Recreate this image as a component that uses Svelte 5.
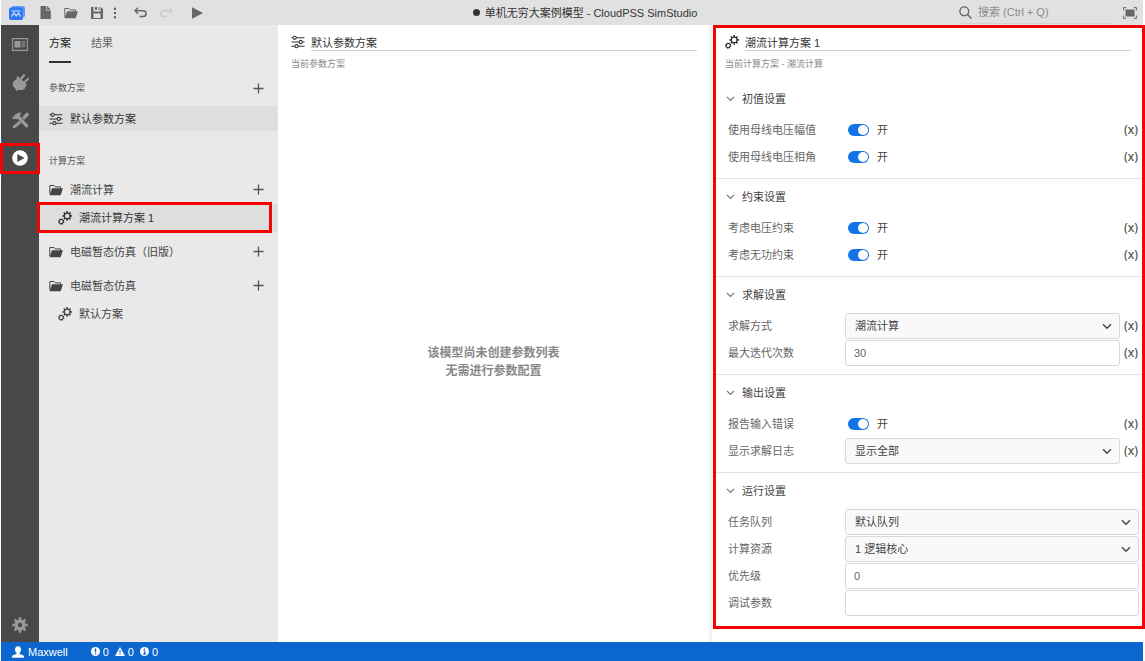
<script lang="ts">
  type Field = {
    id: string;
    label: string;
    kind: 'switch' | 'select' | 'text';
    value?: string;
    expr?: boolean;
  };

  const groups = [
    { name: '潮流计算', plans: ['潮流计算方案 1'] },
    { name: '电磁暂态仿真（旧版）', plans: [] },
    { name: '电磁暂态仿真', plans: ['默认方案'] },
  ];

  const sections: { title: string; fields: Field[] }[] = [
    {
      title: '初值设置',
      fields: [
        { id: 'voltage', label: '使用母线电压幅值', kind: 'switch', expr: true },
        { id: 'angle', label: '使用母线电压相角', kind: 'switch', expr: true },
      ],
    },
    {
      title: '约束设置',
      fields: [
        { id: 'limit-v', label: '考虑电压约束', kind: 'switch', expr: true },
        { id: 'limit-q', label: '考虑无功约束', kind: 'switch', expr: true },
      ],
    },
    {
      title: '求解设置',
      fields: [
        { id: 'method', label: '求解方式', kind: 'select', value: '潮流计算', expr: true },
        { id: 'iterations', label: '最大迭代次数', kind: 'text', value: '30', expr: true },
      ],
    },
    {
      title: '输出设置',
      fields: [
        { id: 'report', label: '报告输入错误', kind: 'switch', expr: true },
        { id: 'log', label: '显示求解日志', kind: 'select', value: '显示全部', expr: true },
      ],
    },
    {
      title: '运行设置',
      fields: [
        { id: 'queue', label: '任务队列', kind: 'select', value: '默认队列' },
        { id: 'resource', label: '计算资源', kind: 'select', value: '1 逻辑核心' },
        { id: 'priority', label: '优先级', kind: 'text', value: '0' },
        { id: 'debug', label: '调试参数', kind: 'text', value: '' },
      ],
    },
  ];

  let selected = $state('潮流计算方案 1');
  let tab = $state('方案');

  // toothed ring with a round hole, filled with evenodd
  function gear(cx: number, cy: number, outer: number, inner: number, hole: number, teeth = 8, turn = 0): string {
    const step = (Math.PI * 2) / teeth;
    const pts: string[] = [];
    for (let i = 0; i < teeth; i++) {
      const a = i * step + turn;
      for (const [r, o] of [[inner, -0.3], [outer, -0.2], [outer, 0.2], [inner, 0.3]]) {
        pts.push(`${(cx + r * Math.cos(a + o * step)).toFixed(2)} ${(cy + r * Math.sin(a + o * step)).toFixed(2)}`);
      }
    }
    return `M${pts.join('L')}ZM${cx - hole} ${cy}a${hole} ${hole} 0 1 0 ${hole * 2} 0a${hole} ${hole} 0 1 0 ${-hole * 2} 0Z`;
  }
</script>

{#snippet gears()}
  <svg width="14" height="14" viewBox="0 0 14 14" fill="currentColor" fill-rule="evenodd" aria-hidden="true">
    <path d={gear(9.2, 4.9, 4.9, 3.5, 2.2)} />
    <path d={gear(3.2, 10.6, 3.2, 2.6, 1.5, 8, 0.3)} />
  </svg>
{/snippet}

{#snippet sliders()}
  <svg width="14" height="14" viewBox="0 0 14 14" fill="none" stroke="currentColor" stroke-width="1.1" aria-hidden="true">
    <path d="M.5 2.8H2M5.4 2.8h8M.5 7H8M11.4 7h2.1M.5 11.2h3.3M7.2 11.2h6.3" />
    <circle cx="3.7" cy="2.8" r="1.6" />
    <circle cx="9.7" cy="7" r="1.6" />
    <circle cx="5.5" cy="11.2" r="1.6" />
  </svg>
{/snippet}

{#snippet folder()}
  <svg width="14" height="12" viewBox="0 0 14 12" aria-hidden="true">
    <path d="M.8 10V1.500h4.200l1.200 1.400h5.300V5" fill="none" stroke="currentColor" stroke-width="1" />
    <path d="M3 4.200h10.900l-2.200 7H.6z" fill="currentColor" />
  </svg>
{/snippet}

{#snippet chevron(size: number)}
  <svg class="chevron" width={size} height={size} viewBox="0 0 10 10" fill="none" stroke="currentColor" stroke-width="1.4" aria-hidden="true">
    <path d="M1 3.2 5 7.2 9 3.2" />
  </svg>
{/snippet}

{#snippet add(name: string)}
  <button class="add" aria-label="新建{name}">
    <svg width="11" height="11" viewBox="0 0 11 11" stroke="currentColor" stroke-width="1.3"><path d="M5.5 .5v10M.5 5.5h10" /></svg>
  </button>
{/snippet}

<div class="app">
  <header class="topbar">
    <div class="tools">
      <svg class="logo" width="16" height="14" viewBox="0 0 16 14" aria-hidden="true">
        <rect x="2.5" width="13.5" height="11.5" rx="2" fill="#5b9bff" />
        <rect y="1.5" width="14" height="12.5" rx="2" fill="#2f78f3" />
        <path d="M2.5 10.500 5 7l2.200 3 2.300-3 2 3.500M2.500 5h9" fill="none" stroke="#dceaff" stroke-width="1.1" />
      </svg>
      <button aria-label="新建">
        <svg width="11" height="13" viewBox="0 0 11 13" fill="currentColor"><path d="M.5 0H6.300v4.500h4.500V13H.5zM7 0l3.8 3.8H7z" /></svg>
      </button>
      <button aria-label="打开">{@render folder()}</button>
      <button aria-label="保存">
        <svg width="12" height="12" viewBox="0 0 12 12" fill="currentColor" fill-rule="evenodd"><path d="M0 0h2.5v4.5h7V0L12 2v10H0zM4 0h2v3H4zM7.5 0h1v3h-1zM2.5 6.5V11h7V6.5z" /></svg>
      </button>
      <button class="more" aria-label="更多">
        <svg width="4" height="12" viewBox="0 0 4 12" fill="currentColor"><circle cx="2" cy="1.7" r="1.2" /><circle cx="2" cy="6" r="1.2" /><circle cx="2" cy="10.3" r="1.2" /></svg>
      </button>
      <button aria-label="撤销">
        <svg width="13" height="11" viewBox="0 0 13 11" fill="none" stroke="currentColor" stroke-width="1.5"><path d="M4 .7 1 3.7l3 3M1 3.7h8.2a2.9 2.9 0 0 1 0 5.8H5.5" /></svg>
      </button>
      <button class="redo" aria-label="重做" disabled>
        <svg width="13" height="11" viewBox="0 0 13 11" fill="none" stroke="currentColor" stroke-width="1.2"><path d="M9 .7l3 3-3 3M12 3.7H3.8a2.9 2.9 0 0 0 0 5.8h3.7" /></svg>
      </button>
      <button class="run" aria-label="运行">
        <svg width="11" height="12" viewBox="0 0 11 12" fill="currentColor"><path d="M0 .3 11 6 0 11.7z" /></svg>
      </button>
    </div>
    <h1><span class="dot"></span>单机无穷大案例模型 - CloudPSS SimStudio</h1>
    <div class="topbar-end">
      <label class="search">
        <svg width="13" height="13" viewBox="0 0 13 13" fill="none" stroke="currentColor" stroke-width="1.4" aria-hidden="true"><circle cx="5.3" cy="5.3" r="4.4" /><path d="m8.5 8.5 4 4" /></svg>
        <input type="search" placeholder="搜索 (Ctrl + Q)" aria-label="搜索" />
      </label>
      <button class="full" aria-label="全屏">
        <svg width="14" height="12" viewBox="0 0 14 12"><path d="M.6 3.5V.6h2.6M10.8.6h2.6v2.9M13.4 8.5v2.9h-2.6M3.2 11.4H.6V8.5" fill="none" stroke="currentColor" /><path d="M2.5 2.5h9v7h-9z" fill="currentColor" /></svg>
      </button>
    </div>
  </header>

  <div class="body">
    <nav class="rail">
      <button aria-label="总览">
        <svg width="16" height="13" viewBox="0 0 16 13"><path d="M.6.6h14.8v11.8H.6z" fill="none" stroke="currentColor" stroke-width="1.1" /><path d="M2.5 3h6v6.5h-6z" fill="currentColor" /><path d="M9.5 3h4v6.5h-4z" fill="currentColor" opacity=".5" /></svg>
      </button>
      <button aria-label="接口">
        <svg width="17" height="17" viewBox="0 0 17 17" fill="currentColor"><path d="M4.500 3.300 5.800 2 15 10.700l-1.300 1.500c0 2.700-3.500 4.600-7.300 3.500L4.200 17l-1-2.600C-.8 12 .3 6.500 4.900 5z" /><path d="m9 5 3-3.800M12.300 8.300l3.700-3.300" stroke="currentColor" stroke-width="2.200" stroke-linecap="round" /></svg>
      </button>
      <button aria-label="实现">
        <svg width="17" height="17" viewBox="0 0 17 17" fill="currentColor"><path d="M3 2.800 6.200.8h3.600L7.900 2.900l.4 1.700 8.400 9.200-2.200 2.200-8.800-9.200-1.600.8L2.800 6.400 1.600 7.600.1 5.900z" /><path d="m14.400.6-4.300 5 2 2.100 4.700-4.300-.3-2.200zM7.200 8.700 1 14l-.3 2 2 .2 6.700-5.200z" /></svg>
      </button>
      <button class="active marked" aria-label="运行" aria-current="page">
        <svg width="16" height="16" viewBox="0 0 16 16" fill="currentColor" fill-rule="evenodd"><path d="M8 .2a7.8 7.8 0 1 0 0 15.6A7.8 7.8 0 1 0 8 .2zM5.300 3.900 12.500 8l-7.200 4.100z" /></svg>
      </button>
      <button class="settings" aria-label="设置">
        <svg width="16" height="16" viewBox="0 0 16 16" fill="currentColor" fill-rule="evenodd"><path d={gear(8, 8, 7.8, 5.6, 2.2)} /></svg>
      </button>
    </nav>

    <aside class="sidebar">
      <div class="tabs" role="tablist">
        {#each ['方案', '结果'] as name}
          <button role="tab" aria-selected={tab === name} class:current={tab === name} onclick={() => (tab = name)}>{name}</button>
        {/each}
      </div>

      <div class="list-head params">
        <h2>参数方案</h2>
        {@render add('参数方案')}
      </div>
      <button class="item selected">{@render sliders()}默认参数方案</button>

      <div class="list-head jobs">
        <h2>计算方案</h2>
      </div>
      <div class="groups">
        {#each groups as group}
          <div class="group">
            <div class="group-head">
              {@render folder()}
              <span>{group.name}</span>
              {@render add(group.name)}
            </div>
            {#each group.plans as plan}
              <button
                class="item child"
                class:selected={selected === plan}
                class:marked={plan === '潮流计算方案 1'}
                onclick={() => (selected = plan)}
              >{@render gears()}{plan}</button>
            {/each}
          </div>
        {/each}
      </div>
    </aside>

    <main class="pane">
      <div class="pane-head">
        {@render sliders()}
        <input value="默认参数方案" aria-label="参数方案名称" />
      </div>
      <p class="sub">当前参数方案</p>
      <p class="empty">该模型尚未创建参数列表<br />无需进行参数配置</p>
    </main>

    <section class="pane plan-pane">
      <div class="plan marked">
        <div class="pane-head">
          {@render gears()}
          <input value="潮流计算方案 1" aria-label="计算方案名称" />
        </div>
        <p class="sub">当前计算方案 - 潮流计算</p>
        {#each sections as section}
          <details class="section" open>
            <summary>{@render chevron(9)}{section.title}</summary>
            {#each section.fields as field}
              <div class="field">
                <label for={field.id}>{field.label}</label>
                {#if field.kind === 'switch'}
                  <div class="switch">
                    <input id={field.id} type="checkbox" role="switch" checked />
                    <span>开</span>
                  </div>
                {:else if field.kind === 'select'}
                  <div class="select">
                    <select id={field.id}><option>{field.value}</option></select>
                    {@render chevron(10)}
                  </div>
                {:else}
                  <input id={field.id} class="text" type="text" value={field.value} />
                {/if}
                {#if field.expr}
                  <button class="expr" aria-label="{field.label}表达式">(x)</button>
                {/if}
              </div>
            {/each}
          </details>
        {/each}
      </div>
    </section>
  </div>

  <footer class="status">
    <button class="user">
      <svg width="12" height="12" viewBox="0 0 12 12" fill="currentColor" aria-hidden="true"><path d="M6 .3c1.900 0 3 1.400 3 3.200 0 1.500-.6 2.700-1.500 3.500v1l3.700 1.300q.8.400.8 2.400H0q0-2 .8-2.400L4.500 8V7C3.600 6.200 3 5 3 3.500 3 1.700 4.100.3 6 .3z" /></svg>
      Maxwell
    </button>
    <button>
      <svg width="9" height="9" viewBox="0 0 9 9" aria-hidden="true"><circle cx="4.5" cy="4.5" r="4.5" fill="currentColor" /><path d="M4.5 1.500v3.700M4.500 6.200v1.300" stroke="#0b66d0" stroke-width="1.4" /></svg>
      0
    </button>
    <button>
      <svg width="10" height="9" viewBox="0 0 10 9" aria-hidden="true"><path d="M5 0l5 9H0z" fill="currentColor" /><path d="M5 3v3M5 6.800V8" stroke="#0b66d0" stroke-width="1.1" /></svg>
      0
    </button>
    <button>
      <svg width="9" height="9" viewBox="0 0 9 9" aria-hidden="true"><circle cx="4.5" cy="4.5" r="4.5" fill="currentColor" /><path d="M4.500 1.500v1.300M3.300 4h1.400v3M3.200 7.100h2.700" fill="none" stroke="#0b66d0" stroke-width="1.2" /></svg>
      0
    </button>
  </footer>
</div>

<style>
  :global(body) {
    margin: 0;
    background: #fff;
  }

  .app {
    --mark: #f20306;
    display: flex;
    flex-direction: column;
    min-height: 100vh;
    box-sizing: border-box;
    padding: 0 2px 0 1px;
    font: 11px/16px "Liberation Sans", "Noto Sans CJK SC", sans-serif;
    color: #444;
  }

  button, input, select {
    font: inherit;
    color: inherit;
    box-sizing: border-box;
    margin: 0;
    padding: 0;
    border: 0;
    background: none;
  }

  svg { display: block; flex-shrink: 0; }

  h1, h2, p { margin: 0; font-weight: 400; font-size: inherit; }

  /* red callout frames */
  .marked { position: relative; }

  .marked::after {
    content: '';
    position: absolute;
    border: 3px solid var(--mark);
    pointer-events: none;
    z-index: 2;
  }

  .topbar {
    display: grid;
    grid-template-columns: 1fr auto 1fr;
    align-items: center;
    height: 25px;
    background: #e1e1e1;
  }

  .tools {
    display: flex;
    align-items: center;
    gap: 13px;
    padding-left: 8px;
    color: #666;
  }

  .tools .logo { margin-right: 2px; }
  .tools .more { margin: 0 4px 0 -3px; }
  .tools .redo { color: #c8c8c8; }
  .tools .run { margin-left: 6px; }

  h1 {
    display: flex;
    align-items: center;
    gap: 5px;
    color: #333;
    white-space: nowrap;
    padding-left: 26px;
  }

  .dot {
    width: 7px;
    height: 7px;
    border-radius: 50%;
    background: #333;
  }

  .topbar-end {
    display: flex;
    align-items: center;
    justify-content: flex-end;
    gap: 11px;
    padding-right: 6px;
  }

  .search {
    display: flex;
    align-items: center;
    gap: 6px;
    width: 153px;
    height: 21px;
    border-bottom: 1px solid #d2d2d2;
    color: #666;
  }

  .search input {
    flex: 1;
    min-width: 0;
    outline: none;
  }

  .search input::placeholder { color: #8c8c8c; }
  .full { color: #666; }

  .body {
    flex: 1;
    display: flex;
  }

  .rail {
    display: flex;
    flex-direction: column;
    width: 38px;
    flex-shrink: 0;
    background: #484848;
    color: #999;
  }

  .rail button {
    display: flex;
    align-items: center;
    justify-content: center;
    height: 38px;
  }

  .rail .active {
    color: #fff;
    box-shadow: inset 1px 0 #1473e6;
  }

  .rail .marked::after { inset: 4px -1px 3px -1px; }
  .rail .settings { margin-top: auto; height: 34px; }

  .sidebar {
    width: 239px;
    flex-shrink: 0;
    background: #e9e9e9;
  }

  .tabs {
    display: flex;
    gap: 20px;
    padding-left: 10px;
  }

  .tabs button {
    height: 38px;
    border-bottom: 2px solid transparent;
    color: #666;
  }

  .tabs .current {
    color: #222;
    border-color: #333;
  }

  .list-head {
    display: flex;
    align-items: center;
    justify-content: space-between;
    height: 28px;
    padding: 0 14px 0 10px;
    font-size: 9px;
    color: #555;
  }

  .list-head.params { margin: 11px 0 4px; }
  .list-head.jobs { margin: 16px 0 0; }

  .add {
    margin-left: auto;
    color: #555;
  }

  .item {
    display: flex;
    align-items: center;
    gap: 7px;
    width: 100%;
    height: 25px;
    padding-left: 10px;
    text-align: left;
  }

  .item.selected { background: #dedede; color: #333; }

  .child {
    height: 28px;
    padding-left: 19px;
  }

  .child.marked::after { inset: -2px 6px -1px -2px; }

  .groups {
    display: flex;
    flex-direction: column;
    gap: 5px;
  }

  .group-head {
    display: flex;
    align-items: center;
    gap: 7px;
    height: 29px;
    padding: 0 14px 0 10px;
  }

  .pane {
    flex: 1;
    min-width: 0;
    display: flex;
    flex-direction: column;
  }

  .pane-head {
    display: flex;
    align-items: center;
    gap: 6px;
    height: 26px;
    padding: 4px 12px 0 13px;
    color: #333;
  }

  .pane-head input {
    flex: 1;
    min-width: 0;
    height: 17px;
    border-bottom: 1px solid #d0d0d0;
    outline: none;
  }

  .sub {
    padding: 1px 13px 0;
    font-size: 9px;
    color: #888;
  }

  .empty {
    margin: auto;
    padding-top: 9px;
    font-size: 12px;
    line-height: 18px;
    font-weight: 700;
    color: #888;
    text-align: center;
  }

  .plan-pane { border-left: 3px solid #f1f1f1; }
  .plan { padding-bottom: 13px; }
  .plan::after { inset: 0 -2px 0 1px; }
  .plan .sub { padding-bottom: 8px; }

  .section {
    padding-bottom: 8px;
    border-top: 1px solid #e4e4e4;
  }

  .section:first-of-type { border-top-color: transparent; }
  .section:last-child { padding-bottom: 0; }

  summary {
    display: flex;
    align-items: center;
    gap: 7px;
    height: 35px;
    padding-left: 14px;
    color: #444;
  }

  summary .chevron { color: #777; }

  .field {
    display: flex;
    align-items: center;
    height: 27px;
    padding: 0 4px 0 16px;
  }

  .field label {
    width: 117px;
    flex-shrink: 0;
    color: #666;
  }

  .switch {
    flex: 1;
    display: flex;
    align-items: center;
    gap: 8px;
    padding-left: 3px;
  }

  .switch input {
    appearance: none;
    width: 21px;
    height: 12px;
    padding: 1px;
    border-radius: 6px;
    background: #aaa;
  }

  .switch input:checked { background: #1473e6; }

  .switch input::before {
    content: '';
    display: block;
    width: 10px;
    height: 10px;
    border-radius: 50%;
    background: #fff;
  }

  .switch input:checked::before { margin-left: auto; }

  .select {
    position: relative;
    flex: 1;
    min-width: 0;
  }

  .select select, .text {
    height: 26px;
    border: 1px solid #d8d8d8;
    border-radius: 3px;
  }

  .select select {
    display: block;
    appearance: none;
    width: 100%;
    padding: 0 28px 0 9px;
    background: #f9f9f9;
  }

  .select .chevron {
    position: absolute;
    top: 8px;
    right: 8px;
    pointer-events: none;
  }

  .text {
    flex: 1;
    min-width: 0;
    padding: 0 8px;
    background: #fff;
    color: #666;
  }

  .expr {
    width: 19px;
    padding-right: 1px;
    font: 500 12px/16px "Noto Sans", sans-serif;
    text-align: right;
    color: #555;
  }

  .status {
    display: flex;
    align-items: center;
    gap: 6px;
    height: 19px;
    padding-left: 11px;
    background: #0b66d0;
    color: #fff;
  }

  .status button {
    display: flex;
    align-items: center;
    gap: 3px;
  }

  .status .user { margin-right: 17px; gap: 4px; }
</style>
